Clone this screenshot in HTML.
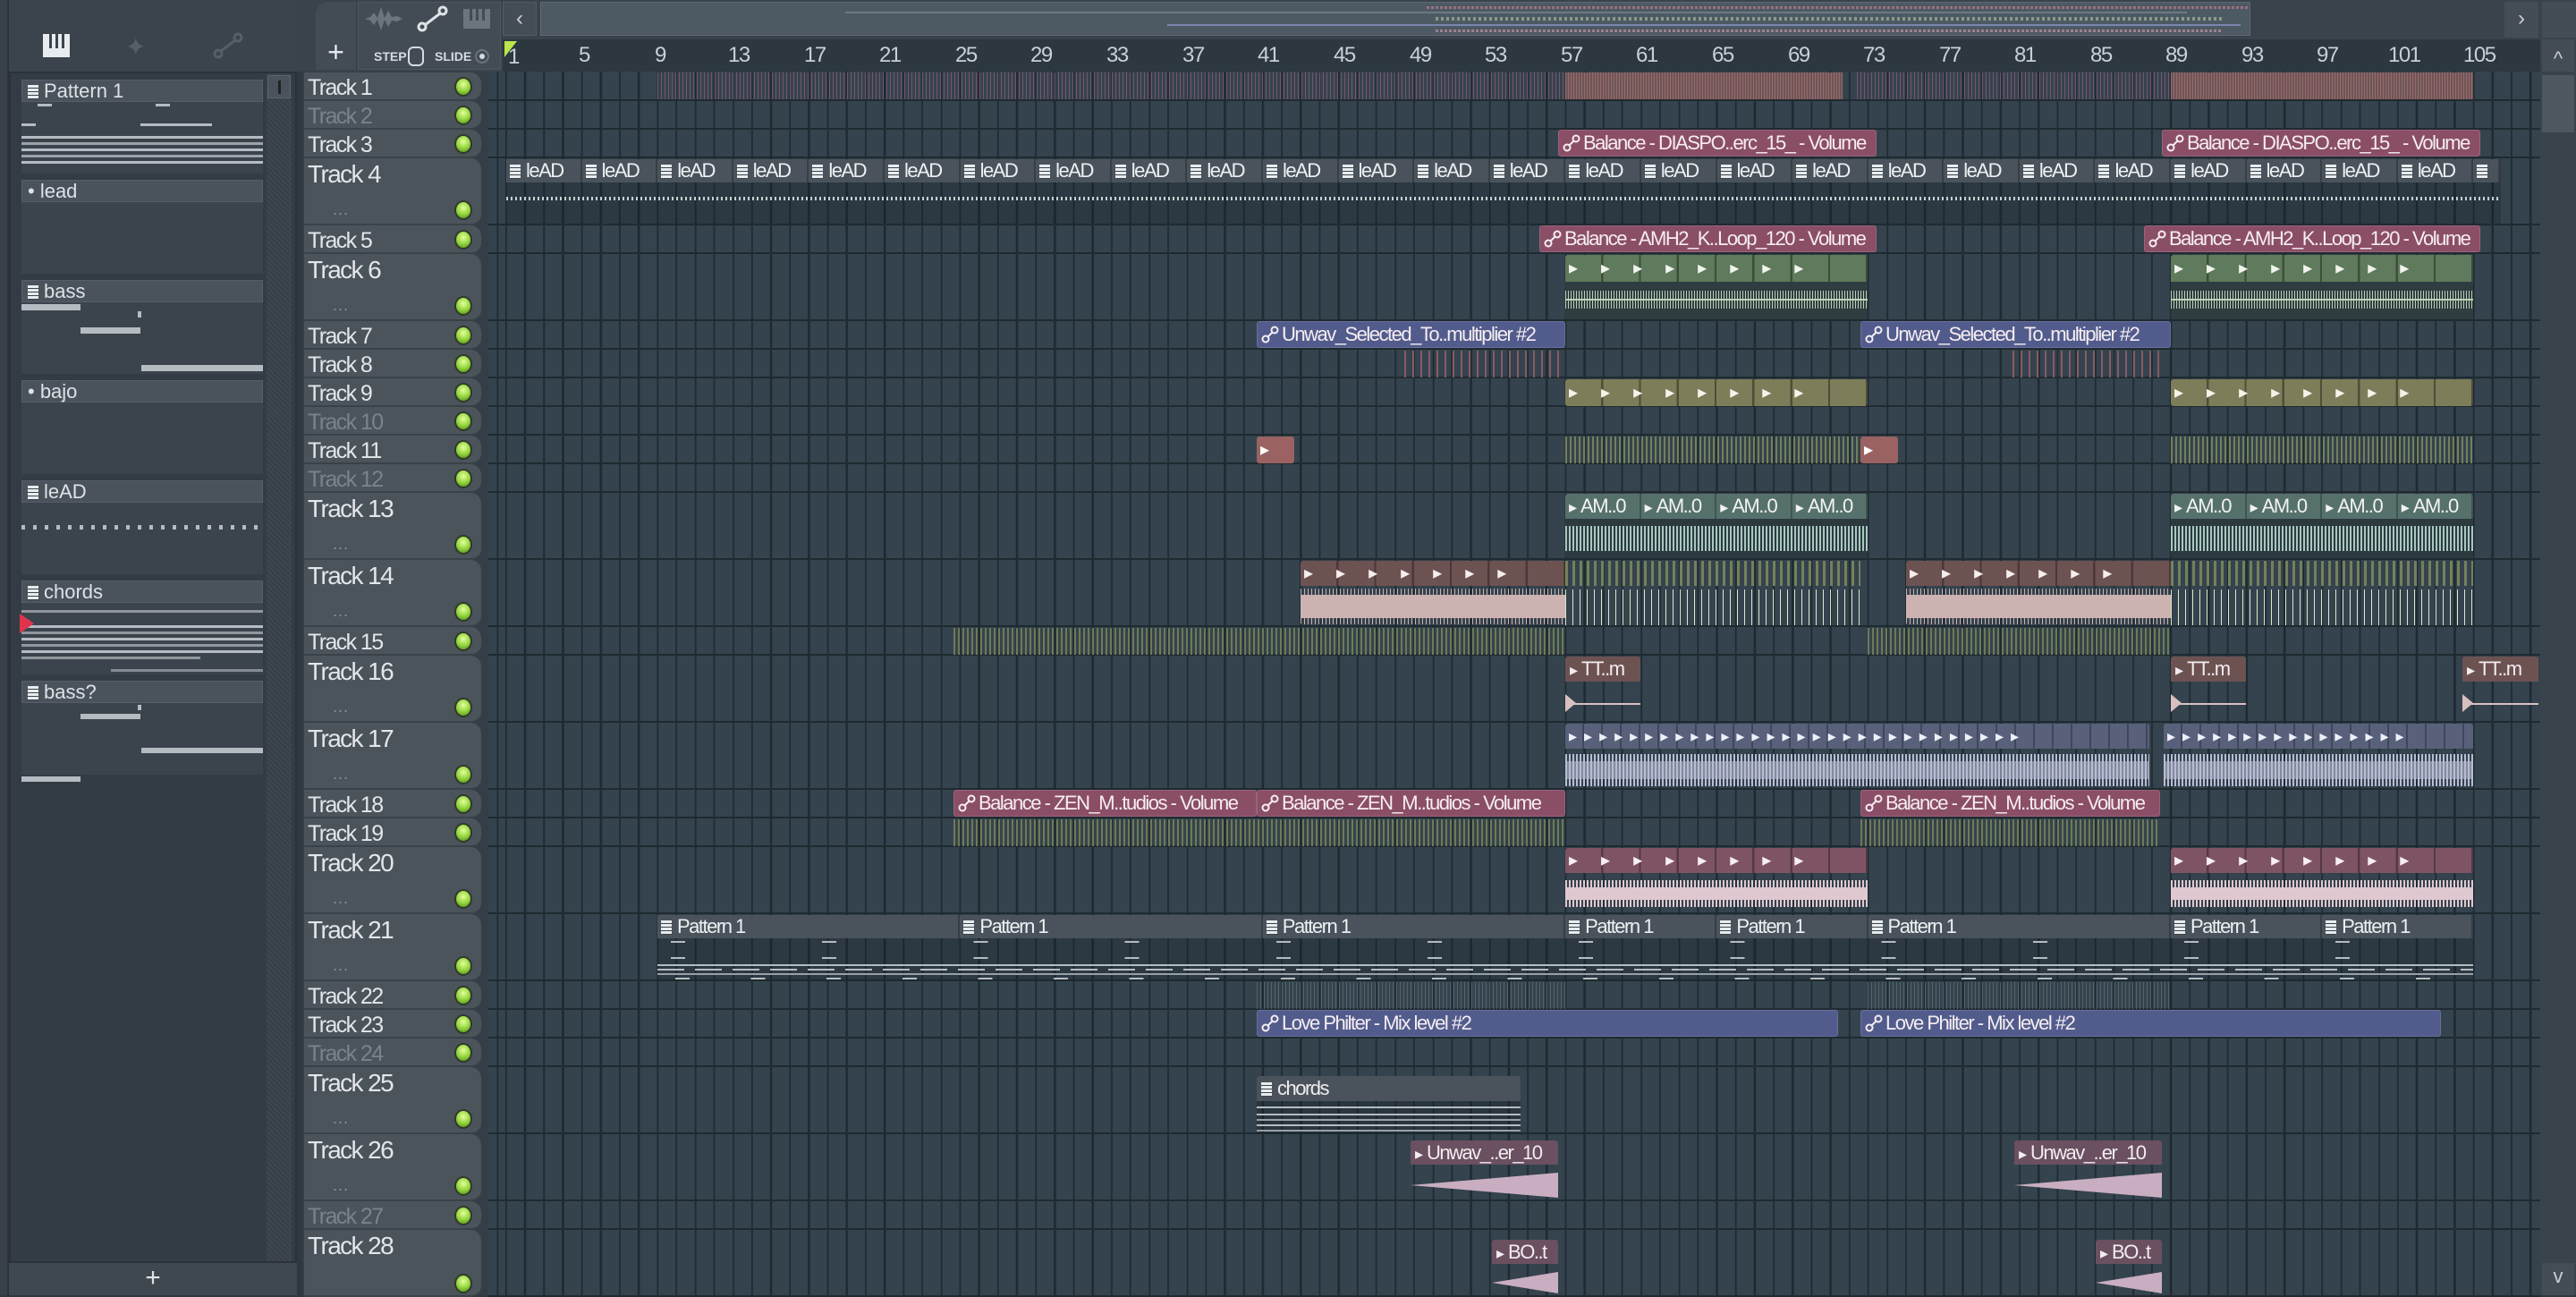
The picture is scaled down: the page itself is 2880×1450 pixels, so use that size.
<!DOCTYPE html>
<html><head><meta charset="utf-8">
<style>
*{margin:0;padding:0;box-sizing:border-box}
body{width:2880px;height:1448px;overflow:hidden;background:#2f383f;font-family:"Liberation Sans Narrow","Liberation Sans",sans-serif;position:relative}
.a{position:absolute}
#grid{position:absolute;left:546px;top:80px;width:2294px;height:1368px;background-color:#34434d;
background-image:repeating-linear-gradient(90deg,#1f2a31 0 2px,transparent 2px 21.15px);background-position:19px 0}
.row{position:absolute;left:546px;width:2294px;border-bottom:2px solid #1f2a31}
.th{position:absolute;left:340px;width:198px;background:#4b535b;border-radius:0 12px 12px 0;border-bottom:2px solid #3a4249}
.th span{position:absolute;left:4px;top:3px;color:#e3e7ea;font-size:25px;letter-spacing:-1.6px}
.th.t span{font-size:28px;top:2px}
.th.d span{color:#7b838a}
.led{position:absolute;left:508px;width:20px;height:22px;border-radius:50%;background:radial-gradient(circle at 50% 35%,#e4ff9a,#8fd23a 55%,#4d7c1a);border:2px solid #2e3a2a}
.dots{position:absolute;left:372px;color:#8a9299;font-size:18px;letter-spacing:1px}
.c{position:absolute;overflow:hidden;border-radius:3px}
.hd{height:26px;line-height:26px;font-size:22px;color:#f2ecef;white-space:nowrap;padding-left:5px;overflow:hidden;letter-spacing:-1.5px}
.auto{height:30px;line-height:28px;font-size:22px;color:#f5edf1;white-space:nowrap;padding-left:4px;border:1px solid rgba(255,255,255,.12);letter-spacing:-1.5px}
.pk{background:#8b4e67}.bl{background:#525c8c}
.pi{display:inline-block;width:12px;height:16px;margin-right:6px;vertical-align:-2px;background-image:repeating-linear-gradient(180deg,#e8ecef 0 3px,#3c444b 3px 4px)}
.lk{display:inline-block;width:20px;height:20px;margin-right:3px;vertical-align:-3px}
.seg{display:inline-block;height:28px;line-height:28px;border-right:2px solid rgba(0,0,0,.25);color:#f2f2f2;font-size:22px;padding-left:4px;vertical-align:top;overflow:hidden;white-space:nowrap;letter-spacing:-1.5px}
.ar{font-size:18px;margin-right:4px;letter-spacing:0}
.wv{position:absolute;left:0;right:0}
.st{position:absolute}
.pat{position:absolute;left:24px;width:270px}
.ph{height:25px;background:#4a535b;border:1px solid #555e66;color:#dde2e6;font-size:22px;line-height:23px;padding-left:6px}
.pb{background:#3b444c;position:relative}
.n{position:absolute;height:3px;background:#b5bcc1}
.rl{position:absolute;top:48px;color:#c9d0d5;font-size:24px;letter-spacing:-1.5px}
</style></head><body>
<svg width="0" height="0" style="position:absolute"><defs><symbol id="lk" viewBox="0 0 20 20"><circle cx="5" cy="15" r="3.5" fill="none" stroke="#f5edf1" stroke-width="2"/><circle cx="15" cy="5" r="3.5" fill="none" stroke="#f5edf1" stroke-width="2"/><line x1="7.5" y1="12.5" x2="12.5" y2="7.5" stroke="#f5edf1" stroke-width="2"/></symbol></defs></svg>

<!-- left browser -->
<div class="a" style="left:0;top:0;width:332px;height:1448px;background:#3b444c"></div>
<div class="a" style="left:10px;top:80px;width:322px;height:1332px;background:#333c44;border:2px solid #2a3137"></div>
<div class="a" style="left:298px;top:82px;width:28px;height:1328px;background:repeating-linear-gradient(45deg,#363f47 0 2px,#3e474f 2px 4px)"></div>
<div class="a" style="left:299px;top:84px;width:26px;height:26px;background:#4a535b;border:1px solid #5b646c"><div class="a" style="left:11px;top:5px;width:3px;height:15px;background:#222"></div></div>
<div class="a" style="left:0;top:0;width:10px;height:1448px;background:#38414a;border-right:2px solid #2a3137"></div>
<div class="a" style="left:10px;top:1412px;width:322px;height:36px;background:#40484f;color:#dfe3e6;font-size:30px;text-align:center;line-height:34px">+</div>
<div class="a" style="left:48px;top:38px;width:30px;height:26px;background:#e8ecef"><div class="a" style="left:7px;top:0;width:3px;height:16px;background:#3b444c"></div><div class="a" style="left:14px;top:0;width:3px;height:16px;background:#3b444c"></div><div class="a" style="left:21px;top:0;width:3px;height:16px;background:#3b444c"></div></div>
<div class="a" style="left:140px;top:36px;color:#565f67;font-size:28px">✦</div>
<svg class="a" style="left:238px;top:36px" width="34" height="30"><circle cx="6" cy="24" r="4" fill="none" stroke="#565f67" stroke-width="3"/><circle cx="28" cy="6" r="4" fill="none" stroke="#565f67" stroke-width="3"/><line x1="9" y1="21" x2="25" y2="9" stroke="#565f67" stroke-width="3"/></svg>

<div class="pat" style="top:89px"><div class="ph"><span class="pi"></span>Pattern 1</div><div class="pb" style="height:80px">
<div class="n" style="left:18px;top:2px;width:16px"></div><div class="n" style="left:150px;top:2px;width:16px"></div><div class="n" style="left:0;top:24px;width:16px"></div><div class="n" style="left:133px;top:24px;width:80px"></div>
<div class="n" style="left:0;top:38px;width:270px"></div><div class="n" style="left:0;top:45px;width:270px;opacity:.8"></div><div class="n" style="left:0;top:52px;width:270px"></div><div class="n" style="left:0;top:59px;width:270px;opacity:.8"></div><div class="n" style="left:0;top:66px;width:270px"></div></div></div>
<div class="pat" style="top:201px"><div class="ph">• lead</div><div class="pb" style="height:80px"></div></div>
<div class="pat" style="top:313px"><div class="ph"><span class="pi"></span>bass</div><div class="pb" style="height:80px"><div class="n" style="left:0;top:2px;width:66px;height:7px"></div><div class="n" style="left:130px;top:10px;width:4px;height:7px"></div><div class="n" style="left:66px;top:28px;width:67px;height:7px"></div><div class="n" style="left:134px;top:70px;width:136px;height:7px"></div></div></div>
<div class="pat" style="top:425px"><div class="ph">• bajo</div><div class="pb" style="height:80px"></div></div>
<div class="pat" style="top:537px"><div class="ph"><span class="pi"></span>leAD</div><div class="pb" style="height:80px"><div class="n" style="left:0;top:25px;width:270px;height:5px;background:repeating-linear-gradient(90deg,#b5bcc1 0 4px,transparent 4px 13px)"></div></div></div>
<div class="pat" style="top:649px"><div class="ph"><span class="pi"></span>chords</div><div class="pb" style="height:80px">
<div class="n" style="left:0;top:8px;width:270px;opacity:.7"></div><div class="n" style="left:0;top:25px;width:270px"></div><div class="n" style="left:0;top:32px;width:270px;opacity:.7"></div><div class="n" style="left:0;top:39px;width:270px"></div><div class="n" style="left:0;top:46px;width:270px;opacity:.7"></div><div class="n" style="left:0;top:53px;width:270px"></div><div class="n" style="left:0;top:60px;width:200px;opacity:.7"></div><div class="n" style="left:100px;top:74px;width:170px;opacity:.6"></div></div></div>
<div class="a" style="left:22px;top:686px;width:0;height:0;border-left:16px solid #e0344e;border-top:11px solid transparent;border-bottom:11px solid transparent"></div>
<div class="pat" style="top:761px"><div class="ph"><span class="pi"></span>bass?</div><div class="pb" style="height:80px"><div class="n" style="left:130px;top:2px;width:4px;height:6px"></div><div class="n" style="left:66px;top:12px;width:67px;height:6px"></div><div class="n" style="left:134px;top:50px;width:136px;height:6px"></div><div class="n" style="left:0;top:82px;width:66px;height:6px"></div></div></div>

<!-- top toolbar -->
<div class="a" style="left:332px;top:0;width:2548px;height:80px;background:#3a434b"></div>
<div class="a" style="left:353px;top:2px;width:45px;height:76px;background:#434c54;border-radius:14px 0 0 0;color:#e6e9ec;font-size:32px;text-align:center;line-height:112px">+</div>
<div class="a" style="left:400px;top:2px;width:160px;height:76px;background:#434c54;border:1px solid #4e575f"></div>
<svg class="a" style="left:408px;top:6px" width="44" height="30"><path d="M0 15 L6 13 L10 8 L14 14 L18 2 L22 14 L26 6 L30 13 L36 12 L42 15 L36 18 L30 17 L26 24 L22 16 L18 28 L14 16 L10 22 L6 17 Z" fill="#6c757c"/></svg>
<svg class="a" style="left:466px;top:6px" width="36" height="30"><circle cx="6" cy="24" r="4" fill="none" stroke="#dfe3e6" stroke-width="3"/><circle cx="29" cy="6" r="4" fill="none" stroke="#dfe3e6" stroke-width="3"/><line x1="9" y1="22" x2="26" y2="9" stroke="#dfe3e6" stroke-width="3"/></svg>
<div class="a" style="left:518px;top:10px;width:30px;height:22px;background:#6c757c"><div class="a" style="left:7px;top:0;width:3px;height:13px;background:#434c54"></div><div class="a" style="left:14px;top:0;width:3px;height:13px;background:#434c54"></div><div class="a" style="left:21px;top:0;width:3px;height:13px;background:#434c54"></div></div>
<div class="a" style="left:418px;top:55px;color:#d6dbdf;font-size:14px;font-weight:bold">STEP</div>
<div class="a" style="left:456px;top:52px;width:18px;height:22px;border:2px solid #d6dbdf;border-radius:6px"></div>
<div class="a" style="left:486px;top:55px;color:#d6dbdf;font-size:14px;font-weight:bold">SLIDE</div>
<div class="a" style="left:531px;top:55px;width:16px;height:16px;border-radius:50%;border:2px solid #6a737a"><div class="a" style="left:3px;top:3px;width:6px;height:6px;border-radius:50%;background:#d6dbdf"></div></div>
<div class="a" style="left:562px;top:2px;width:38px;height:38px;background:#444d55;border:1px solid #525b63;color:#c9ced2;font-size:24px;text-align:center;line-height:36px">‹</div>
<div class="a" style="left:604px;top:2px;width:1912px;height:38px;background:#4e5a63;border:1px solid #5e6a72">
<div class="a" style="left:990px;top:4px;width:920px;height:3px;background:repeating-linear-gradient(90deg,#9a7080 0 3px,transparent 3px 5px)"></div>
<div class="a" style="left:340px;top:10px;width:1500px;height:2px;background:#6c7a84"></div>
<div class="a" style="left:1000px;top:16px;width:880px;height:4px;background:repeating-linear-gradient(90deg,#8a9a88 0 3px,transparent 3px 6px)"></div>
<div class="a" style="left:700px;top:24px;width:1200px;height:2px;background:#7a86b0"></div>
<div class="a" style="left:1000px;top:30px;width:880px;height:3px;background:repeating-linear-gradient(90deg,#a08090 0 3px,transparent 3px 5px)"></div>
</div>
<div class="a" style="left:2800px;top:2px;width:38px;height:40px;background:#444d55;color:#c9ced2;font-size:24px;text-align:center;line-height:38px">›</div>
<div class="a" style="left:2842px;top:2px;width:38px;height:40px;background:#444d55"></div>
<!-- ruler -->
<div class="a" style="left:562px;top:44px;width:2278px;height:36px;background:#2c373f"></div>
<div class="a" style="left:564px;top:46px;width:0;height:0;border-left:14px solid #b9e64a;border-bottom:18px solid transparent"></div>
<div class="rl" style="left:568px;top:50px">1</div>
<div class="rl" style="left:647px">5</div><div class="rl" style="left:732px">9</div><div class="rl" style="left:814px">13</div><div class="rl" style="left:899px">17</div><div class="rl" style="left:983px">21</div><div class="rl" style="left:1068px">25</div><div class="rl" style="left:1152px">29</div><div class="rl" style="left:1237px">33</div><div class="rl" style="left:1322px">37</div><div class="rl" style="left:1406px">41</div><div class="rl" style="left:1491px">45</div><div class="rl" style="left:1576px">49</div><div class="rl" style="left:1660px">53</div><div class="rl" style="left:1745px">57</div><div class="rl" style="left:1829px">61</div><div class="rl" style="left:1914px">65</div><div class="rl" style="left:1999px">69</div><div class="rl" style="left:2083px">73</div><div class="rl" style="left:2168px">77</div><div class="rl" style="left:2252px">81</div><div class="rl" style="left:2337px">85</div><div class="rl" style="left:2421px">89</div><div class="rl" style="left:2506px">93</div><div class="rl" style="left:2590px">97</div><div class="rl" style="left:2670px">101</div><div class="rl" style="left:2754px">105</div>
<!-- right scrollbar -->
<div class="a" style="left:2840px;top:44px;width:40px;height:1404px;background:#3a434b"></div>
<div class="a" style="left:2842px;top:44px;width:36px;height:36px;background:#444d55;color:#c9ced2;font-size:22px;text-align:center;line-height:44px">^</div>
<div class="a" style="left:2842px;top:84px;width:36px;height:64px;background:#4e575f"></div>
<div class="a" style="left:2842px;top:1412px;width:36px;height:36px;background:#444d55;color:#c9ced2;font-size:22px;text-align:center;line-height:30px">v</div>

<div class="a" style="left:338px;top:80px;width:208px;height:1368px;background:#353e46"></div>
<div id="grid"></div>

<div class="row" style="top:81px;height:32px"></div><div class="row" style="top:113px;height:32px"></div><div class="row" style="top:145px;height:32px"></div><div class="row" style="top:177px;height:75px"></div><div class="row" style="top:252px;height:32px"></div><div class="row" style="top:284px;height:75px"></div><div class="row" style="top:359px;height:32px"></div><div class="row" style="top:391px;height:32px"></div><div class="row" style="top:423px;height:32px"></div><div class="row" style="top:455px;height:32px"></div><div class="row" style="top:487px;height:32px"></div><div class="row" style="top:519px;height:32px"></div><div class="row" style="top:551px;height:75px"></div><div class="row" style="top:626px;height:75px"></div><div class="row" style="top:701px;height:32px"></div><div class="row" style="top:733px;height:75px"></div><div class="row" style="top:808px;height:75px"></div><div class="row" style="top:883px;height:32px"></div><div class="row" style="top:915px;height:32px"></div><div class="row" style="top:947px;height:75px"></div><div class="row" style="top:1022px;height:75px"></div><div class="row" style="top:1097px;height:32px"></div><div class="row" style="top:1129px;height:32px"></div><div class="row" style="top:1161px;height:32px"></div><div class="row" style="top:1193px;height:75px"></div><div class="row" style="top:1268px;height:75px"></div><div class="row" style="top:1343px;height:32px"></div><div class="row" style="top:1375px;height:75px"></div>

<div class="th" style="top:81px;height:32px"><span>Track 1</span></div><div class="led" style="top:86px"></div>
<div class="th d" style="top:113px;height:32px"><span>Track 2</span></div><div class="led" style="top:118px"></div>
<div class="th" style="top:145px;height:32px"><span>Track 3</span></div><div class="led" style="top:150px"></div>
<div class="th t" style="top:177px;height:75px"><span>Track 4</span></div><div class="led" style="top:224px"></div><div class="dots" style="top:224px">...</div>
<div class="th" style="top:252px;height:32px"><span>Track 5</span></div><div class="led" style="top:257px"></div>
<div class="th t" style="top:284px;height:75px"><span>Track 6</span></div><div class="led" style="top:331px"></div><div class="dots" style="top:331px">...</div>
<div class="th" style="top:359px;height:32px"><span>Track 7</span></div><div class="led" style="top:364px"></div>
<div class="th" style="top:391px;height:32px"><span>Track 8</span></div><div class="led" style="top:396px"></div>
<div class="th" style="top:423px;height:32px"><span>Track 9</span></div><div class="led" style="top:428px"></div>
<div class="th d" style="top:455px;height:32px"><span>Track 10</span></div><div class="led" style="top:460px"></div>
<div class="th" style="top:487px;height:32px"><span>Track 11</span></div><div class="led" style="top:492px"></div>
<div class="th d" style="top:519px;height:32px"><span>Track 12</span></div><div class="led" style="top:524px"></div>
<div class="th t" style="top:551px;height:75px"><span>Track 13</span></div><div class="led" style="top:598px"></div><div class="dots" style="top:598px">...</div>
<div class="th t" style="top:626px;height:75px"><span>Track 14</span></div><div class="led" style="top:673px"></div><div class="dots" style="top:673px">...</div>
<div class="th" style="top:701px;height:32px"><span>Track 15</span></div><div class="led" style="top:706px"></div>
<div class="th t" style="top:733px;height:75px"><span>Track 16</span></div><div class="led" style="top:780px"></div><div class="dots" style="top:780px">...</div>
<div class="th t" style="top:808px;height:75px"><span>Track 17</span></div><div class="led" style="top:855px"></div><div class="dots" style="top:855px">...</div>
<div class="th" style="top:883px;height:32px"><span>Track 18</span></div><div class="led" style="top:888px"></div>
<div class="th" style="top:915px;height:32px"><span>Track 19</span></div><div class="led" style="top:920px"></div>
<div class="th t" style="top:947px;height:75px"><span>Track 20</span></div><div class="led" style="top:994px"></div><div class="dots" style="top:994px">...</div>
<div class="th t" style="top:1022px;height:75px"><span>Track 21</span></div><div class="led" style="top:1069px"></div><div class="dots" style="top:1069px">...</div>
<div class="th" style="top:1097px;height:32px"><span>Track 22</span></div><div class="led" style="top:1102px"></div>
<div class="th" style="top:1129px;height:32px"><span>Track 23</span></div><div class="led" style="top:1134px"></div>
<div class="th d" style="top:1161px;height:32px"><span>Track 24</span></div><div class="led" style="top:1166px"></div>
<div class="th t" style="top:1193px;height:75px"><span>Track 25</span></div><div class="led" style="top:1240px"></div><div class="dots" style="top:1240px">...</div>
<div class="th t" style="top:1268px;height:75px"><span>Track 26</span></div><div class="led" style="top:1315px"></div><div class="dots" style="top:1315px">...</div>
<div class="th d" style="top:1343px;height:32px"><span>Track 27</span></div><div class="led" style="top:1348px"></div>
<div class="th t" style="top:1375px;height:75px"><span>Track 28</span></div><div class="led" style="top:1424px"></div>

<!-- Track 1 -->
<div class="st" style="left:735px;top:81px;width:1015px;height:30px;background:repeating-linear-gradient(90deg,#7a5470 0 1px,transparent 1px 4px)"></div>
<div class="st" style="left:1750px;top:81px;width:310px;height:30px;background:#6d5557;background-image:repeating-linear-gradient(90deg,#9a6a6a 0 1px,transparent 1px 3px)"></div>
<div class="st" style="left:2076px;top:81px;width:351px;height:30px;background:repeating-linear-gradient(90deg,#7a5470 0 1px,transparent 1px 4px)"></div>
<div class="st" style="left:2427px;top:81px;width:338px;height:30px;background:#6d5557;background-image:repeating-linear-gradient(90deg,#9a6a6a 0 1px,transparent 1px 3px)"></div>

<!-- Track 3 -->
<div class="c auto pk" style="left:1742px;top:145px;width:356px"><svg class="lk"><use href="#lk"/></svg>Balance - DIASPO..erc_15_ - Volume</div>
<div class="c auto pk" style="left:2417px;top:145px;width:356px"><svg class="lk"><use href="#lk"/></svg>Balance - DIASPO..erc_15_ - Volume</div>

<!-- Track 4 -->
<div class="a" style="left:566px;top:178px;width:2230px;height:72px;background:rgba(20,28,34,.25)"></div>
<div class="a" style="left:566px;top:220px;width:2230px;height:4px;background:repeating-linear-gradient(90deg,#c8cfd3 0 2px,transparent 2px 5px)"></div>
<div class="a" style="left:566px;top:178px;height:26px;width:2300px;white-space:nowrap;font-size:0">
<span class="seg" style="width:84.6px;height:26px;line-height:26px;background:#4a535b;color:#eef1f3"><span class="pi"></span>leAD</span><span class="seg" style="width:84.6px;height:26px;line-height:26px;background:#4a535b;color:#eef1f3"><span class="pi"></span>leAD</span><span class="seg" style="width:84.6px;height:26px;line-height:26px;background:#4a535b;color:#eef1f3"><span class="pi"></span>leAD</span><span class="seg" style="width:84.6px;height:26px;line-height:26px;background:#4a535b;color:#eef1f3"><span class="pi"></span>leAD</span><span class="seg" style="width:84.6px;height:26px;line-height:26px;background:#4a535b;color:#eef1f3"><span class="pi"></span>leAD</span><span class="seg" style="width:84.6px;height:26px;line-height:26px;background:#4a535b;color:#eef1f3"><span class="pi"></span>leAD</span><span class="seg" style="width:84.6px;height:26px;line-height:26px;background:#4a535b;color:#eef1f3"><span class="pi"></span>leAD</span><span class="seg" style="width:84.6px;height:26px;line-height:26px;background:#4a535b;color:#eef1f3"><span class="pi"></span>leAD</span><span class="seg" style="width:84.6px;height:26px;line-height:26px;background:#4a535b;color:#eef1f3"><span class="pi"></span>leAD</span><span class="seg" style="width:84.6px;height:26px;line-height:26px;background:#4a535b;color:#eef1f3"><span class="pi"></span>leAD</span><span class="seg" style="width:84.6px;height:26px;line-height:26px;background:#4a535b;color:#eef1f3"><span class="pi"></span>leAD</span><span class="seg" style="width:84.6px;height:26px;line-height:26px;background:#4a535b;color:#eef1f3"><span class="pi"></span>leAD</span><span class="seg" style="width:84.6px;height:26px;line-height:26px;background:#4a535b;color:#eef1f3"><span class="pi"></span>leAD</span><span class="seg" style="width:84.6px;height:26px;line-height:26px;background:#4a535b;color:#eef1f3"><span class="pi"></span>leAD</span><span class="seg" style="width:84.6px;height:26px;line-height:26px;background:#4a535b;color:#eef1f3"><span class="pi"></span>leAD</span><span class="seg" style="width:84.6px;height:26px;line-height:26px;background:#4a535b;color:#eef1f3"><span class="pi"></span>leAD</span><span class="seg" style="width:84.6px;height:26px;line-height:26px;background:#4a535b;color:#eef1f3"><span class="pi"></span>leAD</span><span class="seg" style="width:84.6px;height:26px;line-height:26px;background:#4a535b;color:#eef1f3"><span class="pi"></span>leAD</span><span class="seg" style="width:84.6px;height:26px;line-height:26px;background:#4a535b;color:#eef1f3"><span class="pi"></span>leAD</span><span class="seg" style="width:84.6px;height:26px;line-height:26px;background:#4a535b;color:#eef1f3"><span class="pi"></span>leAD</span><span class="seg" style="width:84.6px;height:26px;line-height:26px;background:#4a535b;color:#eef1f3"><span class="pi"></span>leAD</span><span class="seg" style="width:84.6px;height:26px;line-height:26px;background:#4a535b;color:#eef1f3"><span class="pi"></span>leAD</span><span class="seg" style="width:84.6px;height:26px;line-height:26px;background:#4a535b;color:#eef1f3"><span class="pi"></span>leAD</span><span class="seg" style="width:84.6px;height:26px;line-height:26px;background:#4a535b;color:#eef1f3"><span class="pi"></span>leAD</span><span class="seg" style="width:84.6px;height:26px;line-height:26px;background:#4a535b;color:#eef1f3"><span class="pi"></span>leAD</span><span class="seg" style="width:84.6px;height:26px;line-height:26px;background:#4a535b;color:#eef1f3"><span class="pi"></span>leAD</span><span class="seg" style="width:30px;height:26px;line-height:26px;background:#4a535b;color:#eef1f3"><span class="pi"></span></span>
</div>

<!-- Track 5 -->
<div class="c auto pk" style="left:1721px;top:252px;width:377px"><svg class="lk"><use href="#lk"/></svg>Balance - AMH2_K..Loop_120 - Volume</div>
<div class="c auto pk" style="left:2397px;top:252px;width:376px"><svg class="lk"><use href="#lk"/></svg>Balance - AMH2_K..Loop_120 - Volume</div>

<!-- Track 6 -->
<div class="c" style="left:1750px;top:285px;width:338px;height:72px;background:#2f3c40"><div style="height:30px;background:#5f7a5c;background-image:repeating-linear-gradient(90deg,transparent 0 40px,#3d4e3c 40px 42.3px);color:#f0f4ee;font-size:20px;line-height:30px;letter-spacing:26px;padding-left:4px;white-space:nowrap">▸▸▸▸▸▸▸▸</div><div class="wv" style="top:40px;height:20px;background:repeating-linear-gradient(90deg,#b9d0b4 0 1px,transparent 1px 3px)"></div><div class="wv" style="top:49px;height:2px;background:#b9d0b4"></div></div>
<div class="c" style="left:2427px;top:285px;width:338px;height:72px;background:#2f3c40"><div style="height:30px;background:#5f7a5c;background-image:repeating-linear-gradient(90deg,transparent 0 40px,#3d4e3c 40px 42.3px);color:#f0f4ee;font-size:20px;line-height:30px;letter-spacing:26px;padding-left:4px;white-space:nowrap">▸▸▸▸▸▸▸▸</div><div class="wv" style="top:40px;height:20px;background:repeating-linear-gradient(90deg,#b9d0b4 0 1px,transparent 1px 3px)"></div><div class="wv" style="top:49px;height:2px;background:#b9d0b4"></div></div>

<!-- Track 7 -->
<div class="c auto bl" style="left:1405px;top:359px;width:345px"><svg class="lk"><use href="#lk"/></svg>Unwav_Selected_To..multiplier #2</div>
<div class="c auto bl" style="left:2080px;top:359px;width:347px"><svg class="lk"><use href="#lk"/></svg>Unwav_Selected_To..multiplier #2</div>
<div class="st" style="left:1570px;top:392px;width:175px;height:30px;background:repeating-linear-gradient(90deg,#8a5a62 0 2px,transparent 2px 9px)"></div>
<div class="st" style="left:2250px;top:392px;width:170px;height:30px;background:repeating-linear-gradient(90deg,#8a5a62 0 2px,transparent 2px 9px)"></div>
<!-- Track 9 -->
<div class="c" style="left:1750px;top:424px;width:338px;height:30px;background:#7d7d5a;background-image:repeating-linear-gradient(90deg,transparent 0 40px,#4e4e38 40px 42.3px);color:#f4f4ea;font-size:20px;line-height:30px;letter-spacing:26px;padding-left:4px;white-space:nowrap">▸▸▸▸▸▸▸▸</div>
<div class="c" style="left:2427px;top:424px;width:338px;height:30px;background:#7d7d5a;background-image:repeating-linear-gradient(90deg,transparent 0 40px,#4e4e38 40px 42.3px);color:#f4f4ea;font-size:20px;line-height:30px;letter-spacing:26px;padding-left:4px;white-space:nowrap">▸▸▸▸▸▸▸▸</div>
<!-- Track 11 -->
<div class="c" style="left:1405px;top:488px;width:42px;height:30px;background:#9a6262;color:#fff;font-size:20px;line-height:30px;padding-left:4px">▸</div>
<div class="c" style="left:2080px;top:488px;width:42px;height:30px;background:#9a6262;color:#fff;font-size:20px;line-height:30px;padding-left:4px">▸</div>
<div class="st" style="left:1750px;top:488px;width:330px;height:30px;background:repeating-linear-gradient(90deg,#74805a 0 2px,transparent 2px 5px)"></div>
<div class="st" style="left:2427px;top:488px;width:338px;height:30px;background:repeating-linear-gradient(90deg,#74805a 0 2px,transparent 2px 5px)"></div>

<!-- Track 13 -->
<div class="c" style="left:1750px;top:552px;width:338px;height:72px;background:#2c3a40"><div style="white-space:nowrap;font-size:0"><span class="seg" style="width:84.6px;background:#56716b"><span class="ar">▸</span>AM..0</span><span class="seg" style="width:84.6px;background:#56716b"><span class="ar">▸</span>AM..0</span><span class="seg" style="width:84.6px;background:#56716b"><span class="ar">▸</span>AM..0</span><span class="seg" style="width:84.6px;background:#56716b"><span class="ar">▸</span>AM..0</span></div><div class="wv" style="top:36px;height:28px;background:repeating-linear-gradient(90deg,#a8c8c0 0 2px,transparent 2px 4px)"></div></div>
<div class="c" style="left:2427px;top:552px;width:338px;height:72px;background:#2c3a40"><div style="white-space:nowrap;font-size:0"><span class="seg" style="width:84.6px;background:#56716b"><span class="ar">▸</span>AM..0</span><span class="seg" style="width:84.6px;background:#56716b"><span class="ar">▸</span>AM..0</span><span class="seg" style="width:84.6px;background:#56716b"><span class="ar">▸</span>AM..0</span><span class="seg" style="width:84.6px;background:#56716b"><span class="ar">▸</span>AM..0</span></div><div class="wv" style="top:36px;height:28px;background:repeating-linear-gradient(90deg,#a8c8c0 0 2px,transparent 2px 4px)"></div></div>

<!-- Track 14 -->
<div class="c" style="left:1454px;top:627px;width:296px;height:72px"><div style="height:28px;background:#6d5252;background-image:repeating-linear-gradient(90deg,transparent 0 40px,#4a3838 40px 42.3px);color:#f4eeee;font-size:20px;line-height:28px;letter-spacing:26px;padding-left:4px;white-space:nowrap">▸▸▸▸▸▸▸</div><div class="wv" style="top:38px;height:26px;background:#cdb2b2"></div><div class="wv" style="top:31px;height:40px;background:repeating-linear-gradient(90deg,#cdb2b2 0 1px,transparent 1px 4px)"></div></div>
<div class="c" style="left:2131px;top:627px;width:296px;height:72px"><div style="height:28px;background:#6d5252;background-image:repeating-linear-gradient(90deg,transparent 0 40px,#4a3838 40px 42.3px);color:#f4eeee;font-size:20px;line-height:28px;letter-spacing:26px;padding-left:4px;white-space:nowrap">▸▸▸▸▸▸▸</div><div class="wv" style="top:38px;height:26px;background:#cdb2b2"></div><div class="wv" style="top:31px;height:40px;background:repeating-linear-gradient(90deg,#cdb2b2 0 1px,transparent 1px 4px)"></div></div>
<div class="st" style="left:1750px;top:627px;width:330px;height:28px;background:repeating-linear-gradient(90deg,#74805a 0 3px,transparent 3px 8px)"></div>
<div class="st" style="left:1750px;top:659px;width:330px;height:40px;background:repeating-linear-gradient(90deg,#dfe8c8 0 1px,transparent 1px 8px)"></div>
<div class="st" style="left:2427px;top:627px;width:338px;height:28px;background:repeating-linear-gradient(90deg,#74805a 0 3px,transparent 3px 8px)"></div>
<div class="st" style="left:2427px;top:659px;width:338px;height:40px;background:repeating-linear-gradient(90deg,#dfe8c8 0 1px,transparent 1px 8px)"></div>

<!-- Track 15 -->
<div class="st" style="left:1066px;top:702px;width:684px;height:30px;background:repeating-linear-gradient(90deg,#6f7a55 0 2px,transparent 2px 5px)"></div>
<div class="st" style="left:2088px;top:702px;width:339px;height:30px;background:repeating-linear-gradient(90deg,#6f7a55 0 2px,transparent 2px 5px)"></div>

<!-- Track 16 -->
<div class="c" style="left:1750px;top:734px;width:84px;height:72px"><div class="hd" style="background:#6d5252;height:28px;line-height:28px"><span class="ar">▸</span>TT..m</div><div class="wv" style="top:52px;height:2px;background:#d8c0c0"></div><div class="a" style="left:0;top:42px;width:0;height:0;border-left:12px solid #d8c0c0;border-top:10px solid transparent;border-bottom:10px solid transparent"></div></div>
<div class="c" style="left:2427px;top:734px;width:84px;height:72px"><div class="hd" style="background:#6d5252;height:28px;line-height:28px"><span class="ar">▸</span>TT..m</div><div class="wv" style="top:52px;height:2px;background:#d8c0c0"></div><div class="a" style="left:0;top:42px;width:0;height:0;border-left:12px solid #d8c0c0;border-top:10px solid transparent;border-bottom:10px solid transparent"></div></div>
<div class="c" style="left:2753px;top:734px;width:85px;height:72px"><div class="hd" style="background:#6d5252;height:28px;line-height:28px"><span class="ar">▸</span>TT..m</div><div class="wv" style="top:52px;height:2px;background:#d8c0c0"></div><div class="a" style="left:0;top:42px;width:0;height:0;border-left:12px solid #d8c0c0;border-top:10px solid transparent;border-bottom:10px solid transparent"></div></div>

<!-- Track 17 -->
<div class="c" style="left:1750px;top:809px;width:653px;height:72px"><div style="height:28px;background:#59607a;background-image:repeating-linear-gradient(90deg,transparent 0 19px,#40465a 19px 21px);color:#eef0f8;font-size:18px;line-height:28px;letter-spacing:8px;padding-left:4px;white-space:nowrap">▸▸▸▸▸▸▸▸▸▸▸▸▸▸▸▸▸▸▸▸▸▸▸▸▸▸▸▸▸▸</div><div class="wv" style="top:34px;height:36px;background:repeating-linear-gradient(90deg,#b8bcd4 0 2px,transparent 2px 4px)"></div><div class="wv" style="top:42px;height:20px;background:#b8bcd4;opacity:.6"></div></div>
<div class="c" style="left:2419px;top:809px;width:346px;height:72px"><div style="height:28px;background:#59607a;background-image:repeating-linear-gradient(90deg,transparent 0 19px,#40465a 19px 21px);color:#eef0f8;font-size:18px;line-height:28px;letter-spacing:8px;padding-left:4px;white-space:nowrap">▸▸▸▸▸▸▸▸▸▸▸▸▸▸▸▸</div><div class="wv" style="top:34px;height:36px;background:repeating-linear-gradient(90deg,#b8bcd4 0 2px,transparent 2px 4px)"></div><div class="wv" style="top:42px;height:20px;background:#b8bcd4;opacity:.6"></div></div>

<!-- Track 18 -->
<div class="c auto pk" style="left:1066px;top:883px;width:339px"><svg class="lk"><use href="#lk"/></svg>Balance - ZEN_M..tudios - Volume</div>
<div class="c auto pk" style="left:1405px;top:883px;width:345px"><svg class="lk"><use href="#lk"/></svg>Balance - ZEN_M..tudios - Volume</div>
<div class="c auto pk" style="left:2080px;top:883px;width:335px"><svg class="lk"><use href="#lk"/></svg>Balance - ZEN_M..tudios - Volume</div>
<div class="st" style="left:1066px;top:916px;width:684px;height:30px;background:repeating-linear-gradient(90deg,#6f7a55 0 2px,transparent 2px 5px)"></div>
<div class="st" style="left:2080px;top:916px;width:335px;height:30px;background:repeating-linear-gradient(90deg,#6f7a55 0 2px,transparent 2px 5px)"></div>

<!-- Track 20 -->
<div class="c" style="left:1750px;top:948px;width:338px;height:72px"><div style="height:28px;background:#7e5464;background-image:repeating-linear-gradient(90deg,transparent 0 40px,#563844 40px 42.3px);color:#f6eef2;font-size:20px;line-height:28px;letter-spacing:26px;padding-left:4px;white-space:nowrap">▸▸▸▸▸▸▸▸</div><div class="wv" style="top:36px;height:30px;background:repeating-linear-gradient(90deg,#e0c8d0 0 2px,transparent 2px 4px)"></div><div class="wv" style="top:44px;height:14px;background:#e0c8d0"></div></div>
<div class="c" style="left:2427px;top:948px;width:338px;height:72px"><div style="height:28px;background:#7e5464;background-image:repeating-linear-gradient(90deg,transparent 0 40px,#563844 40px 42.3px);color:#f6eef2;font-size:20px;line-height:28px;letter-spacing:26px;padding-left:4px;white-space:nowrap">▸▸▸▸▸▸▸▸</div><div class="wv" style="top:36px;height:30px;background:repeating-linear-gradient(90deg,#e0c8d0 0 2px,transparent 2px 4px)"></div><div class="wv" style="top:44px;height:14px;background:#e0c8d0"></div></div>

<!-- Track 21 -->
<div class="a" style="left:735px;top:1023px;width:2030px;height:73px;background:rgba(20,28,34,.25)"></div>
<div class="a" style="left:735px;top:1023px;height:26px;width:2040px;white-space:nowrap;font-size:0">
<span class="seg" style="width:338.4px;height:26px;line-height:26px;background:#4a535b;color:#eef1f3"><span class="pi"></span>Pattern 1</span><span class="seg" style="width:338.4px;height:26px;line-height:26px;background:#4a535b;color:#eef1f3"><span class="pi"></span>Pattern 1</span><span class="seg" style="width:338.4px;height:26px;line-height:26px;background:#4a535b;color:#eef1f3"><span class="pi"></span>Pattern 1</span><span class="seg" style="width:169.2px;height:26px;line-height:26px;background:#4a535b;color:#eef1f3"><span class="pi"></span>Pattern 1</span><span class="seg" style="width:169.2px;height:26px;line-height:26px;background:#4a535b;color:#eef1f3"><span class="pi"></span>Pattern 1</span><span class="seg" style="width:338.4px;height:26px;line-height:26px;background:#4a535b;color:#eef1f3"><span class="pi"></span>Pattern 1</span><span class="seg" style="width:169.2px;height:26px;line-height:26px;background:#4a535b;color:#eef1f3"><span class="pi"></span>Pattern 1</span><span class="seg" style="width:169.2px;height:26px;line-height:26px;background:#4a535b;color:#eef1f3"><span class="pi"></span>Pattern 1</span></div>
<div class="a" style="left:750px;top:1052px;width:2015px;height:2px;background:repeating-linear-gradient(90deg,#b5bcc1 0 16px,transparent 16px 169.2px)"></div>
<div class="a" style="left:750px;top:1070px;width:2015px;height:2px;background:repeating-linear-gradient(90deg,#b5bcc1 0 16px,transparent 16px 169.2px)"></div>
<div class="a" style="left:735px;top:1078px;width:2030px;height:2px;background:#b5bcc1"></div>
<div class="a" style="left:735px;top:1083px;width:2030px;height:2px;background:repeating-linear-gradient(90deg,#b5bcc1 0 30px,transparent 30px 42px)"></div>
<div class="a" style="left:735px;top:1088px;width:2030px;height:2px;background:#98a0a6"></div>
<div class="a" style="left:735px;top:1093px;width:2030px;height:2px;background:repeating-linear-gradient(90deg,transparent 0 20px,#b5bcc1 20px 36px,transparent 36px 84.6px)"></div>

<!-- Track 22/23 -->
<div class="st" style="left:1405px;top:1098px;width:345px;height:30px;background:repeating-linear-gradient(90deg,#56636c 0 1px,transparent 1px 4px)"></div>
<div class="st" style="left:2088px;top:1098px;width:339px;height:30px;background:repeating-linear-gradient(90deg,#56636c 0 1px,transparent 1px 4px)"></div>
<div class="c auto bl" style="left:1405px;top:1129px;width:650px"><svg class="lk"><use href="#lk"/></svg>Love Philter - Mix level #2</div>
<div class="c auto bl" style="left:2080px;top:1129px;width:649px"><svg class="lk"><use href="#lk"/></svg>Love Philter - Mix level #2</div>

<!-- Track 25 -->
<div class="c" style="left:1405px;top:1203px;width:295px;height:64px;background:rgba(20,28,34,.3)"><div class="hd" style="background:#4a535b;height:28px;line-height:28px"><span class="pi"></span>chords</div>
<div class="wv" style="top:34px;height:2px;background:#b5bcc1"></div><div class="wv" style="top:42px;height:2px;background:#b5bcc1"></div><div class="wv" style="top:48px;height:2px;background:#98a0a6"></div><div class="wv" style="top:54px;height:2px;background:#b5bcc1"></div><div class="wv" style="top:60px;height:2px;background:#98a0a6"></div></div>

<!-- Track 26 -->
<div class="c" style="left:1577px;top:1275px;width:165px;height:66px"><div class="hd" style="background:#6a5060;height:27px;line-height:27px"><span class="ar">▸</span>Unwav_..er_10</div><div class="a" style="left:0;top:36px;width:0;height:0;border-right:165px solid #c8aec0;border-top:14px solid transparent;border-bottom:14px solid transparent"></div></div>
<div class="c" style="left:2252px;top:1275px;width:165px;height:66px"><div class="hd" style="background:#6a5060;height:27px;line-height:27px"><span class="ar">▸</span>Unwav_..er_10</div><div class="a" style="left:0;top:36px;width:0;height:0;border-right:165px solid #c8aec0;border-top:14px solid transparent;border-bottom:14px solid transparent"></div></div>
<!-- Track 28 -->
<div class="c" style="left:1668px;top:1386px;width:74px;height:62px"><div class="hd" style="background:#6a5060;height:27px;line-height:27px"><span class="ar">▸</span>BO..t</div><div class="a" style="left:0;top:36px;width:0;height:0;border-right:74px solid #c8aec0;border-top:12px solid transparent;border-bottom:12px solid transparent"></div></div>
<div class="c" style="left:2343px;top:1386px;width:74px;height:62px"><div class="hd" style="background:#6a5060;height:27px;line-height:27px"><span class="ar">▸</span>BO..t</div><div class="a" style="left:0;top:36px;width:0;height:0;border-right:74px solid #c8aec0;border-top:12px solid transparent;border-bottom:12px solid transparent"></div></div>
</body></html>
